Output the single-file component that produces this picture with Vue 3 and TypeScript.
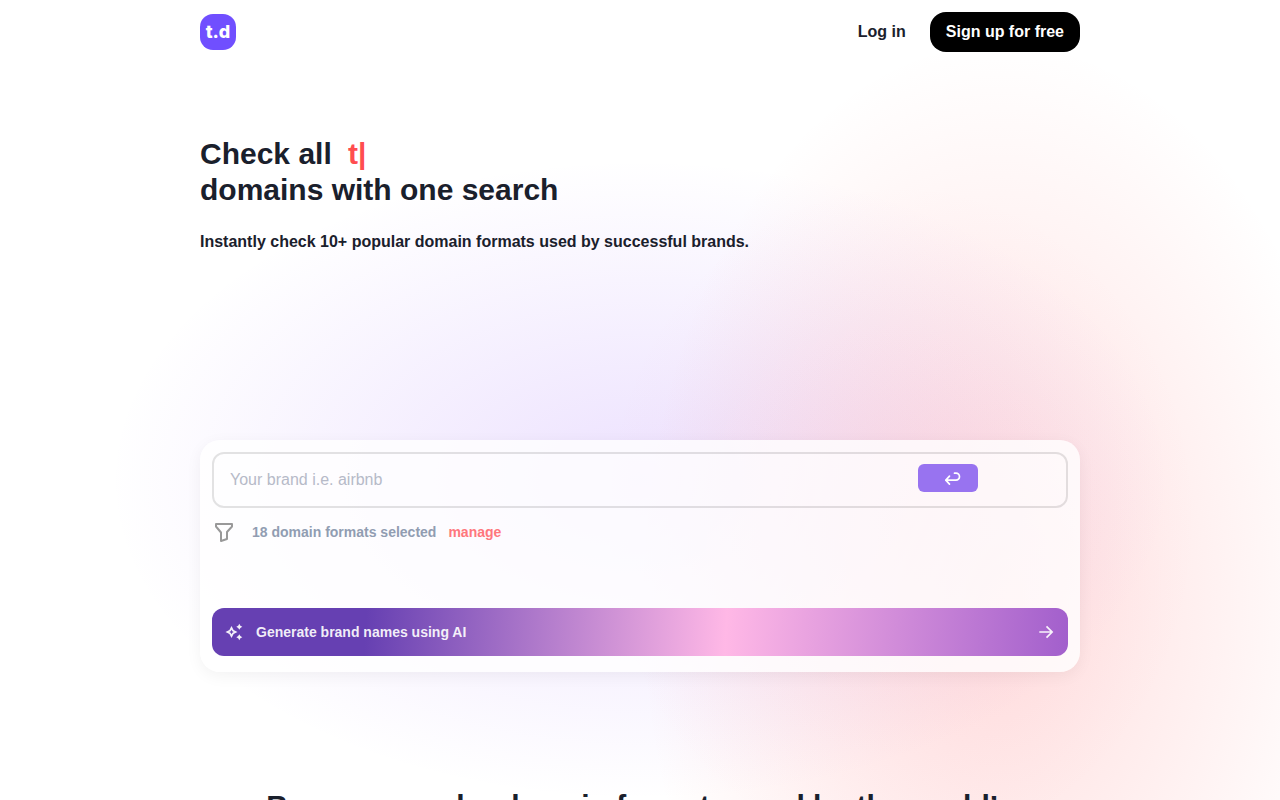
<script setup lang="ts">
import { ref } from 'vue'

const brand = ref('')
const typed = ref('t')
const formatCount = ref(18)
</script>

<template>
  <div class="page">
    <header class="topbar">
      <a class="logo" href="#" aria-label="t.d home">
        <span>t.d</span>
      </a>
      <nav class="nav">
        <a class="login" href="#">Log in</a>
        <button class="signup" type="button">Sign up for free</button>
      </nav>
    </header>

    <main>
      <section class="hero">
        <h1>Check all <span class="typed">{{ typed }}|</span><br />domains with one search</h1>
        <p>Instantly check 10+ popular domain formats used by successful brands.</p>
      </section>

      <form class="card" @submit.prevent>
        <div class="search">
          <input v-model="brand" type="text" aria-label="Brand name" placeholder="Your brand i.e. airbnb" />
          <button class="enter" type="submit" aria-label="Search">
            <svg width="20" height="20" viewBox="0 0 20 20" fill="none" stroke="currentColor" stroke-width="1.700" stroke-linecap="round" stroke-linejoin="round">
              <path d="M7.500 8.200L3.800 12.200L7.500 16.200M3.800 12.200H14A3.500 3.500 0 0 0 14 5.200H12.500" />
            </svg>
          </button>
        </div>

        <div class="filters">
          <svg class="funnel" width="24" height="24" viewBox="0 0 24 24" fill="none" stroke="currentColor" stroke-width="2" stroke-linejoin="round">
            <path d="M4 4h16v2.500l-5 5.500v7l-6 2v-8.500l-5-6z" />
          </svg>
          <span>{{ formatCount }} domain formats selected</span>
          <button class="manage" type="button">manage</button>
        </div>

        <button class="generate" type="button">
          <svg width="20" height="20" viewBox="0 0 20 20" fill="currentColor" fill-rule="evenodd">
            <path d="M7.500 4L9.600 7.900L13.500 10L9.600 12.100L7.500 16L5.400 12.100L1.500 10L5.400 7.900ZM7.500 7.800L6.700 9.200L5.300 10L6.700 10.800L7.500 12.200L8.300 10.800L9.700 10L8.300 9.200Z" />
            <path d="M15.300 1.800L16.400 3.700L18.300 4.800L16.400 5.900L15.300 7.800L14.200 5.900L12.300 4.800L14.200 3.700Z" />
            <path d="M15.300 12.200L16.400 14.100L18.300 15.200L16.400 16.300L15.300 18.200L14.200 16.300L12.300 15.200L14.200 14.100Z" />
          </svg>
          <span>Generate brand names using AI</span>
          <svg class="arrow" width="20" height="20" viewBox="0 0 20 20" fill="none" stroke="currentColor" stroke-width="1.700" stroke-linejoin="miter">
            <path d="M3.300 10H16M10.500 4.400L16.100 10L10.500 15.600" />
          </svg>
        </button>
      </form>

      <h2>Browse popular domain formats used by the world’s</h2>
    </main>
  </div>
</template>

<style>
html,
body {
  margin: 0;
}
</style>

<style scoped>
.page {
  min-height: 100vh;
  box-sizing: border-box;
  padding: 0 24px;
  color: #1a202c;
  font-family: "Liberation Sans", Arial, sans-serif;
  background-color: #fff;
  background-image:
    radial-gradient(ellipse 300px 340px at 900px 520px, rgba(255, 95, 140, 0.07), rgba(255, 95, 140, 0) 100%),
    radial-gradient(ellipse 360px 560px at 1000px 600px, rgba(255, 90, 90, 0.2), rgba(255, 100, 80, 0) 100%),
    radial-gradient(ellipse 530px 320px at 640px 480px, rgba(145, 80, 250, 0.17), rgba(145, 80, 250, 0) 100%);
}

.topbar,
main {
  max-width: 880px;
  margin: 0 auto;
}

.topbar {
  display: flex;
  align-items: center;
  justify-content: space-between;
  height: 64px;
}

.logo {
  display: flex;
  align-items: center;
  justify-content: center;
  width: 36px;
  height: 36px;
  border-radius: 13px;
  background: #704fff;
  color: #fff;
  font: 800 18px/24px Inter, sans-serif;
  text-decoration: none;
}

.nav {
  display: flex;
  align-items: center;
  gap: 24px;
}

.login {
  color: #1a202c;
  font-size: 16px;
  font-weight: 700;
  text-decoration: none;
}

button {
  border: 0;
  font-family: inherit;
  font-weight: 700;
  cursor: pointer;
}

.signup {
  height: 40px;
  padding: 0 16px;
  border-radius: 16px;
  background: #000;
  color: #fff;
  font-size: 16px;
}

.hero {
  min-height: 304px;
  padding-top: 72px;
}

h1,
h2 {
  margin: 0;
  font-size: 30px;
  line-height: 36px;
  font-weight: 700;
}

.typed {
  margin-left: 8px;
  color: #ff4d4f;
}

.hero p {
  margin: 24px 0 0;
  font-size: 16px;
  line-height: 20px;
  font-weight: 700;
}

.card {
  box-sizing: border-box;
  padding: 12px 12px 16px;
  border-radius: 20px;
  background: rgba(255, 255, 255, 0.8);
  box-shadow: 0 4px 16px rgba(0, 0, 0, 0.05);
}

.search {
  display: flex;
  align-items: center;
  box-sizing: border-box;
  height: 56px;
  padding: 0 88px 4px 16px;
  border: 2px solid rgba(0, 0, 0, 0.11);
  border-radius: 12px;
}

.search input {
  flex: 1;
  min-width: 0;
  height: 48px;
  padding: 4px 0 0;
  border: 0;
  outline: 0;
  background: transparent;
  color: #1a202c;
  font: 400 16px/24px "Liberation Sans", Arial, sans-serif;
}

.search input::placeholder {
  color: #b6bac8;
  opacity: 1;
}

.enter {
  display: flex;
  align-items: center;
  justify-content: center;
  width: 60px;
  height: 28px;
  padding: 0 0 0 8px;
  border-radius: 6px;
  background: #9873f0;
  color: #fff;
}

.filters {
  display: flex;
  align-items: center;
  height: 24px;
  margin-top: 12px;
  color: #919db2;
  font-size: 14px;
  font-weight: 700;
}

.funnel {
  margin-right: 16px;
  color: #999;
}

.manage {
  margin-left: 12px;
  padding: 0;
  background: transparent;
  color: #ff777d;
  font-size: 14px;
}

.generate {
  display: flex;
  align-items: center;
  width: 100%;
  height: 48px;
  margin-top: 64px;
  padding: 0 12px;
  border-radius: 12px;
  background: linear-gradient(93deg, #6640b2 18%, #ffb8e6 60%, #a25fcc 100%);
  color: rgba(255, 255, 255, 0.92);
  font-size: 14px;
}

.generate span {
  margin-left: 12px;
}

.arrow {
  margin-left: auto;
}

h2 {
  margin-top: 116px;
  text-align: center;
}
</style>
